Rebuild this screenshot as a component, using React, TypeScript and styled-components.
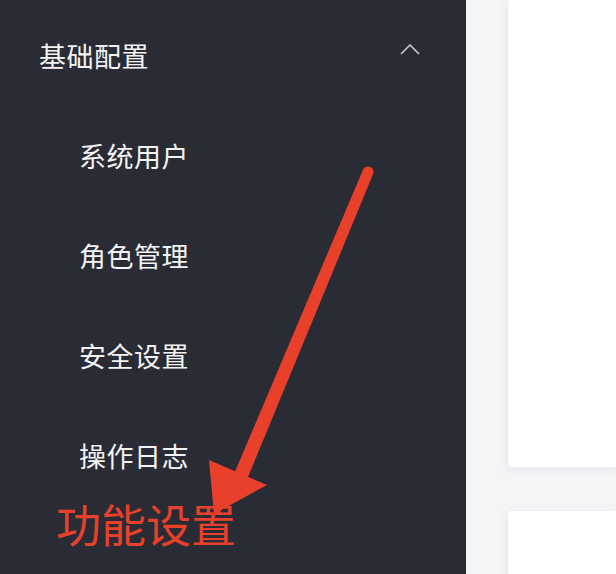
import styled, { createGlobalStyle } from 'styled-components'

const GlobalStyle = createGlobalStyle`
    html, body {
        margin: 0;
        padding: 0;
        width: 616px;
        height: 574px;
        overflow: hidden;
        background: #f4f5f7;
    }
    * {
        box-sizing: border-box;
    }
`

const subItems = ['系统用户', '角色管理', '安全设置', '操作日志']

const ChevronUp = () => (
    <svg width="20" height="11" viewBox="0 0 20 11" fill="none">
        <path d="M1 10 L10 1 L19 10" stroke="#c8cad0" strokeWidth="1.6" />
    </svg>
)

const Arrow = () => (
    <ArrowLayer width="616" height="574" viewBox="0 0 616 574">
        <circle cx="368" cy="172" r="5.5" fill="#e8402a" />
        <polygon points="373.1,174.1 362.9,169.9 233.5,475.3 246.5,480.7" fill="#e8402a" />
        <polygon points="209,460 267,485 214,514" fill="#e8402a" />
    </ArrowLayer>
)

const App = () => {
    return <Page>
        <GlobalStyle />
        <Sidebar>
            <MenuHeader>
                <span>基础配置</span>
                <ChevronUp />
            </MenuHeader>
            {subItems.map(item => (
                <MenuItem key={item}>{item}</MenuItem>
            ))}
            <Note>功能设置</Note>
        </Sidebar>
        <Main>
            <Card $height={467} />
            <Card $height={120} />
        </Main>
        <Arrow />
    </Page>
}

export default App

const Page = styled.div`
    position: relative;
    display: flex;
    width: 616px;
    height: 574px;
    overflow: hidden;
    font-family: "Noto Sans CJK SC", "Noto Sans", sans-serif;
`

const Sidebar = styled.div`
    position: relative;
    width: 466px;
    height: 100%;
    flex-shrink: 0;
    background: #292c34;
    padding-top: 5px;
    display: flex;
    flex-direction: column;
`

const MenuHeader = styled.div`
    height: 100px;
    display: flex;
    align-items: center;
    justify-content: space-between;
    padding: 0 46px 0 39px;
    color: #f4f4f5;
    font-size: 27px;
    letter-spacing: 0.5px;
    svg {
        margin-top: -11px;
    }
`

const MenuItem = styled.div`
    height: 100px;
    display: flex;
    align-items: center;
    padding-left: 79px;
    color: #f4f4f5;
    font-size: 27px;
    letter-spacing: 0.5px;
`

const Note = styled.div`
    position: absolute;
    left: 56px;
    top: 494px;
    color: #e8402a;
    font-size: 45px;
    line-height: 60px;
`

const Main = styled.div`
    flex: 1;
    display: flex;
    flex-direction: column;
    gap: 44px;
    padding-left: 42px;
`

const Card = styled.div<{ $height: number }>`
    height: ${p => p.$height}px;
    flex-shrink: 0;
    background: #ffffff;
    border-radius: 3px 0 0 3px;
    box-shadow: 0 2px 12px rgba(20, 30, 60, 0.08);
`

const ArrowLayer = styled.svg`
    position: absolute;
    left: 0;
    top: 0;
    pointer-events: none;
`
